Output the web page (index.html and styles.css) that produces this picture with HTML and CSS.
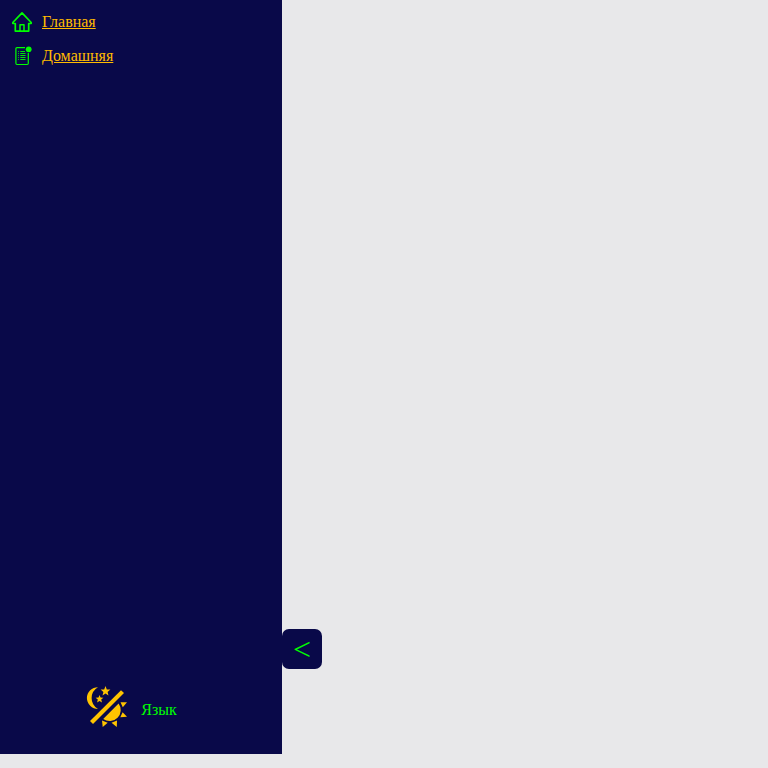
FILE: index.html
```html
<!DOCTYPE html>
<html lang="ru">
<head>
<meta charset="utf-8">
<title>Главная</title>
<link rel="stylesheet" href="styles.css">
</head>
<body>
<aside class="sidebar">
  <nav class="menu">
    <a class="link" href="#">
      <svg class="icon" viewBox="0 0 20 20" fill="none" stroke="#00ff00" stroke-width="1.7" stroke-linejoin="round" stroke-linecap="round"><path d="M10 .9 .8 10.5V11.5H3.3V19.1H16.7V11.5H19.2V10.5Z"/><path stroke-width="1.5" d="M8 19V12.8H12V19"/></svg>
      <span>Главная</span>
    </a>
    <a class="link" href="#">
      <svg class="icon" viewBox="0 0 20 20" fill="none" stroke="#00ff00"><path stroke-width="1.2" d="M13 1.6H5Q3.9 1.6 3.9 2.8V17.3Q3.9 18.5 5 18.5H15.2Q16.3 18.5 16.3 17.3V7"/><path stroke-width=".9" d="M8.3 5.5H13M8.3 7.5H13.5M8.3 9.5H13.5M8.3 11.5H13.5M8.3 13.5H13.5"/><path stroke-width=".7" d="M6 5.5H7M6 7.5H7M6 9.5H7M6 11.5H7M6 13.5H7"/><circle cx="16.7" cy="3.3" r="2.9" fill="#00ff00" stroke="none"/></svg>
      <span>Домашняя</span>
    </a>
  </nav>
  <div class="footer">
    <svg class="theme" viewBox="0 0 42 42" fill="#ffc400"><path d="M12 1.2A11 11 0 0 0 .9 12.1 11 11 0 0 0 12 23A12.5 12.5 0 0 1 12 1.2Z"/><path d="m19.5 0 1.3 3.4 3.6.2-2.8 2.3.9 3.5-3-1.9-3 1.9.9-3.5-2.8-2.3 3.6-.2Z"/><path d="m13.5 9 1.1 2.6 2.8.2-2.2 1.8.8 2.8-2.5-1.5-2.4 1.5.7-2.8-2.2-1.8 2.9-.2Z"/><path d="M35 4.2 38 7 7 38 4 35Z"/><path d="M32.6 17.4A11.1 11.1 0 0 1 17.2 33Z"/><path d="M34.5 16.3H41L36.8 21.2ZM36.6 26.3 41 30.8 34.3 31.2ZM25.5 36.8 31 34.6 30.8 41ZM16 34.6 21.7 36.8 16.7 41Z"/></svg>
    <span class="language">Язык</span>
  </div>
  <button class="toggle">&lt;</button>
</aside>
</body>
</html>
```
FILE: styles.css
```css
body {
  margin: 0;
  background: #e8e8ea;
  font: 16px "Liberation Serif", serif;
}
.sidebar {
  position: relative;
  box-sizing: border-box;
  display: flex;
  flex-direction: column;
  justify-content: space-between;
  width: 282px;
  height: 754px;
  padding: 12px 12px 26px;
  background: #090949;
}
.menu {
  display: flex;
  flex-direction: column;
  gap: 14px;
}
.link {
  display: flex;
  align-items: center;
  gap: 10px;
  height: 20px;
  color: #ffbb00;
}
.icon {
  width: 20px;
  height: 20px;
}
.footer {
  display: flex;
  align-items: center;
  gap: 13.3px;
  padding-left: 74px;
}
.theme {
  width: 42px;
  height: 42px;
}
.language {
  padding-top: 6px;
  color: #00ff00;
}
.toggle {
  position: absolute;
  left: 282px;
  top: 629px;
  width: 40px;
  height: 40px;
  padding: 0;
  border: 0;
  border-radius: 7px;
  background: #090949;
  color: #00ff00;
  font: 32px "Liberation Serif", serif;
}
```
